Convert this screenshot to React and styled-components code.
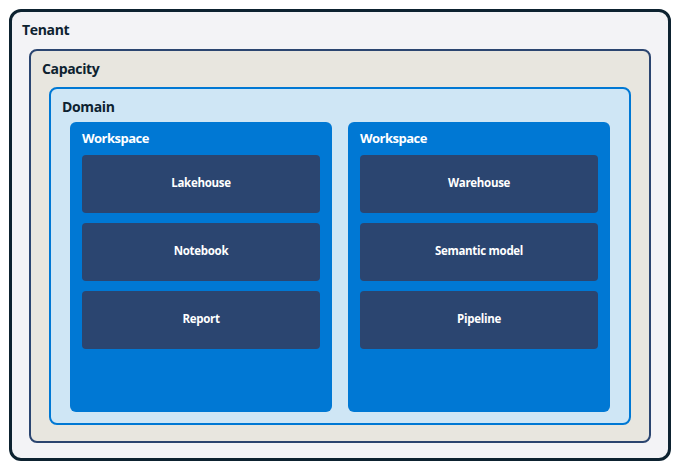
import React from 'react';
import styled, { createGlobalStyle } from 'styled-components';

const GlobalStyle = createGlobalStyle`
  html, body {
    margin: 0;
    background: #ffffff;
  }

  body {
    font-family: 'Open Sans', 'Noto Sans', sans-serif;
  }
`;

const Page = styled.div`
  width: 680px;
  height: 470px;
  box-sizing: border-box;
  padding: 9px;
`;

const Tenant = styled.div`
  height: 100%;
  box-sizing: border-box;
  display: flex;
  flex-direction: column;
  padding: 9px 17px 15px 10px;
  background: #f3f3f6;
  border: 3px solid #0d2230;
  border-radius: 12px;
`;

const Capacity = styled.div`
  flex: 1;
  display: flex;
  flex-direction: column;
  padding: 9px 18px 16px 11px;
  margin-left: 7px;
  background: #e8e6df;
  border: 2px solid #2b4570;
  border-radius: 8px;
`;

const Domain = styled.div`
  flex: 1;
  display: flex;
  flex-direction: column;
  padding: 9px 19px 11px 11px;
  margin-left: 7px;
  background: #cfe6f5;
  border: 2px solid #0078d4;
  border-radius: 8px;
`;

const Label = styled.div`
  font-size: 14px;
  line-height: 18px;
  font-weight: 700;
  letter-spacing: -0.35px;
  color: #0d2230;
  margin-bottom: ${(p) => p.$gap}px;
`;

const WorkspaceLabel = styled.div`
  font-size: 13px;
  line-height: 18px;
  font-weight: 700;
  letter-spacing: -0.5px;
  color: #ffffff;
  margin-bottom: 8px;
`;

const Workspaces = styled.div`
  flex: 1;
  display: grid;
  grid-template-columns: 262px 262px;
  gap: 16px;
  margin-left: 8px;
`;

const Workspace = styled.div`
  display: flex;
  flex-direction: column;
  padding: 7px 12px;
  background: #0078d4;
  border-radius: 6px;
`;

const Items = styled.div`
  display: flex;
  flex-direction: column;
  gap: 10px;
`;

const Item = styled.div`
  height: 58px;
  padding-bottom: 3px;
  box-sizing: border-box;
  display: flex;
  align-items: center;
  justify-content: center;
  background: #2b4570;
  border-radius: 4px;
  color: #ffffff;
  font-size: 11.5px;
  font-weight: 700;
  letter-spacing: -0.3px;
`;

const workspaces = [
  ['Lakehouse', 'Notebook', 'Report'],
  ['Warehouse', 'Semantic model', 'Pipeline'],
];

export default function App() {
  return (
    <Page>
      <GlobalStyle />
      <Tenant>
        <Label $gap={10}>Tenant</Label>
        <Capacity>
          <Label $gap={9}>Capacity</Label>
          <Domain>
            <Label $gap={6}>Domain</Label>
            <Workspaces>
              {workspaces.map((items, i) => (
                <Workspace key={i}>
                  <WorkspaceLabel>Workspace</WorkspaceLabel>
                  <Items>
                    {items.map((name) => (
                      <Item key={name}>{name}</Item>
                    ))}
                  </Items>
                </Workspace>
              ))}
            </Workspaces>
          </Domain>
        </Capacity>
      </Tenant>
    </Page>
  );
}
